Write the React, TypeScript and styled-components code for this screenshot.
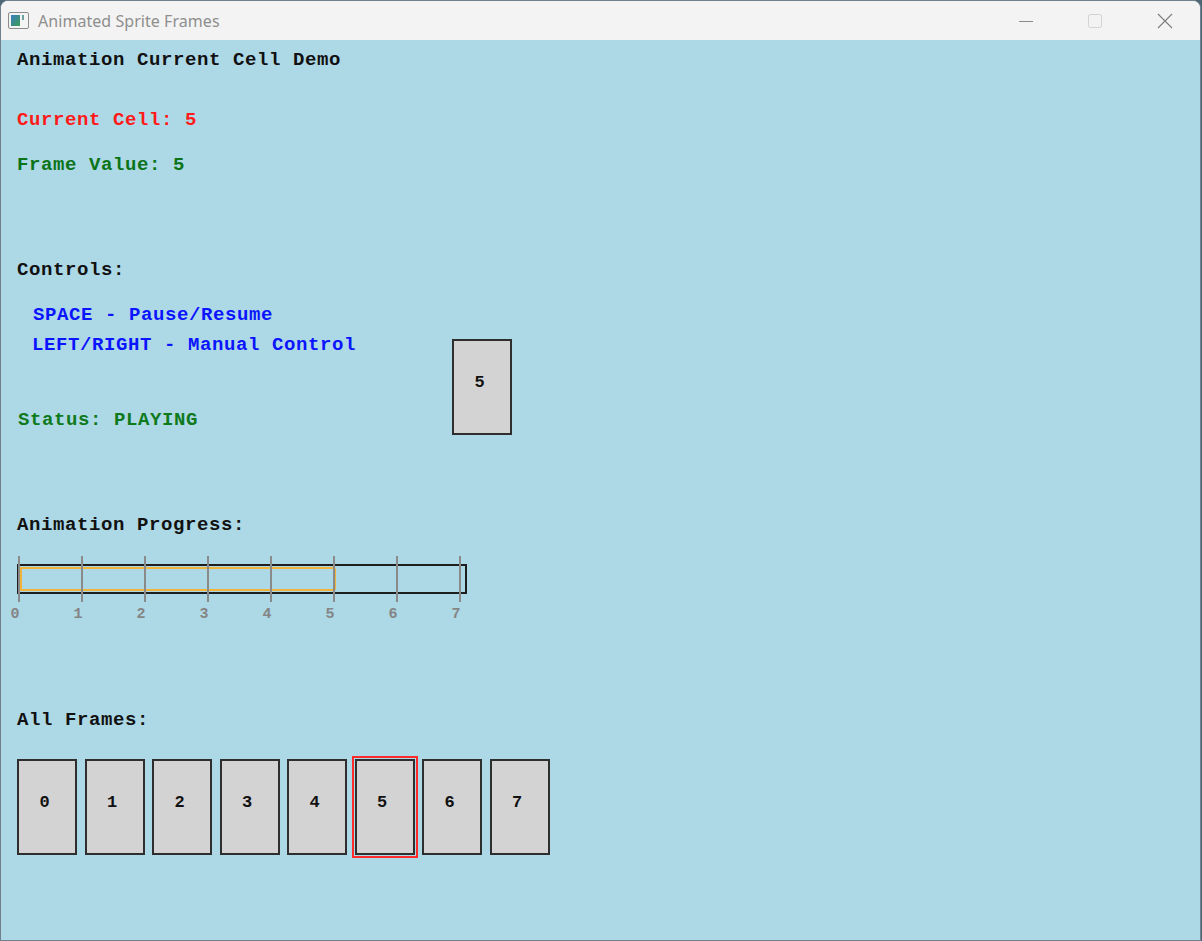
import React from "react";
import styled, { createGlobalStyle } from "styled-components";

const GlobalStyle = createGlobalStyle`
  html, body { margin: 0; padding: 0; }
  body { background: #4f6676; overflow: hidden; }
`;

const PIXEL = `"Liberation Mono", "DejaVu Sans Mono", monospace`;

const Window = styled.div`
  width: 1199px;
  height: 939px;
  border: 1px solid #70808c;
  border-radius: 8px 8px 0 0;
  overflow: hidden;
  display: flex;
  flex-direction: column;
  background: #f3f3f3;
`;

const TitleBar = styled.div`
  height: 39px;
  flex: none;
  display: flex;
  align-items: center;
  background: #f3f3f3;
`;

const AppIcon = styled.svg`
  margin-left: 7px;
  width: 22px;
  height: 20px;
  flex: none;
`;

const TitleText = styled.span`
  margin-left: 8px;
  font-family: "Noto Sans", "Open Sans", sans-serif;
  font-size: 16px;
  color: #8e8e8e;
  letter-spacing: 0.05px;
`;

const Caption = styled.div`
  margin-left: auto;
  display: flex;
  height: 100%;
`;

const CaptionButton = styled.div`
  width: 70px;
  height: 100%;
  display: flex;
  align-items: center;
  justify-content: center;
`;

const Content = styled.div`
  flex: 1;
  background: #add8e6;
  padding-left: 16px;
  display: flex;
  flex-direction: column;
  align-items: flex-start;
`;

const Line = styled.div<{ $color?: string; $top: number; $indent?: number }>`
  font-family: ${PIXEL};
  font-weight: bold;
  font-size: 19px;
  letter-spacing: 0.6px;
  line-height: 20px;
  height: 20px;
  white-space: pre;
  color: ${(p) => p.$color || "#111"};
  margin-top: ${(p) => p.$top}px;
  margin-left: ${(p) => p.$indent || 0}px;
`;

const ControlsRow = styled.div`
  display: flex;
  align-items: flex-start;
  margin-top: 25px;
`;

const ControlsColumn = styled.div`
  width: 435px;
  display: flex;
  flex-direction: column;
`;

const FrameBox = styled.div<{ $selected?: boolean; $top?: number }>`
  box-sizing: border-box;
  width: 60px;
  height: 96px;
  flex: none;
  margin-top: ${(p) => p.$top || 0}px;
  padding: 0 5px 10px 0;
  background: #d3d3d3;
  border: 2px solid #2e2e2e;
  display: flex;
  align-items: center;
  justify-content: center;
  font-family: ${PIXEL};
  font-weight: bold;
  font-size: 17px;
  color: #111;
  outline: ${(p) => (p.$selected ? "2px solid #ff2a2a" : "none")};
  outline-offset: 1px;
`;

const ProgressArea = styled.div`
  position: relative;
  width: 470px;
  height: 66px;
  margin-top: 21px;
`;

const Bar = styled.div`
  box-sizing: border-box;
  margin-top: 8px;
  width: 450px;
  height: 30px;
  border: 2px solid #1e1e1e;
  padding: 1px;
`;

const BarFill = styled.div`
  box-sizing: border-box;
  height: 24px;
  border: 2px solid #f2b33a;
  border-radius: 1px 3px 3px 1px;
`;

const Tick = styled.div`
  position: absolute;
  top: 0;
  width: 2px;
  height: 46px;
  margin-left: -1px;
  background: #8a8a8a;
`;

const TickLabel = styled.div`
  position: absolute;
  top: 51px;
  width: 16px;
  margin-left: -8px;
  text-align: center;
  font-family: ${PIXEL};
  font-weight: bold;
  font-size: 15px;
  line-height: 16px;
  color: #858585;
`;

const FramesRow = styled.div`
  display: flex;
  gap: 7.5px;
  margin-top: 29px;
`;

const TICK_STEP = 63;

export default function App() {
  const current = 5;
  const total = 8;
  return (
    <>
      <GlobalStyle />
      <Window>
        <TitleBar>
          <AppIcon viewBox="0 0 22 20">
            <defs>
              <linearGradient id="ig" x1="0" y1="0" x2="1" y2="1">
                <stop offset="0" stopColor="#3a7fbf" />
                <stop offset="1" stopColor="#3c9a55" />
              </linearGradient>
            </defs>
            <rect x="0.5" y="1.5" width="20" height="16" rx="1.5" fill="#f4f4f4" stroke="#8c8c8c" />
            <rect x="3" y="4" width="9" height="11" fill="url(#ig)" />
            <rect x="14" y="4" width="2" height="5" fill="#6aa0a0" />
          </AppIcon>
          <TitleText>Animated Sprite Frames</TitleText>
          <Caption>
            <CaptionButton>
              <svg width="16" height="16" viewBox="0 0 16 16">
                <line x1="2" y1="8.5" x2="16" y2="8.5" stroke="#8a8a8a" strokeWidth="1" />
              </svg>
            </CaptionButton>
            <CaptionButton>
              <svg width="16" height="16" viewBox="0 0 16 16">
                <rect x="1.5" y="1.5" width="13" height="13" rx="2" fill="none" stroke="#d2d2d2" strokeWidth="1" />
              </svg>
            </CaptionButton>
            <CaptionButton>
              <svg width="16" height="16" viewBox="0 0 16 16">
                <path d="M1 1 L15 15 M15 1 L1 15" stroke="#7c7c7c" strokeWidth="1.1" />
              </svg>
            </CaptionButton>
          </Caption>
        </TitleBar>
        <Content>
          <Line $top={10}>Animation Current Cell Demo</Line>
          <Line $top={40} $color="#ff1a1a">Current Cell: {current}</Line>
          <Line $top={25} $color="#0b7418">Frame Value: {current}</Line>
          <Line $top={85}>Controls:</Line>
          <ControlsRow>
            <ControlsColumn>
              <Line $top={0} $indent={16} $color="#0a14ff">SPACE - Pause/Resume</Line>
              <Line $top={10} $indent={15} $color="#0a14ff">LEFT/RIGHT - Manual Control</Line>
              <Line $top={55} $indent={1} $color="#0e7a1c">Status: PLAYING</Line>
            </ControlsColumn>
            <FrameBox $top={34}>{current}</FrameBox>
          </ControlsRow>
          <Line $top={80}>Animation Progress:</Line>
          <ProgressArea>
            <Bar>
              <BarFill style={{ width: `${current * TICK_STEP + 1}px` }} />
            </Bar>
            {Array.from({ length: total }, (_, i) => (
              <React.Fragment key={i}>
                <Tick style={{ left: `${1.5 + i * TICK_STEP}px` }} />
                <TickLabel style={{ left: `${-2 + i * TICK_STEP}px` }}>{i}</TickLabel>
              </React.Fragment>
            ))}
          </ProgressArea>
          <Line $top={88}>All Frames:</Line>
          <FramesRow>
            {Array.from({ length: total }, (_, i) => (
              <FrameBox key={i} $selected={i === current}>
                {i}
              </FrameBox>
            ))}
          </FramesRow>
        </Content>
      </Window>
    </>
  );
}
